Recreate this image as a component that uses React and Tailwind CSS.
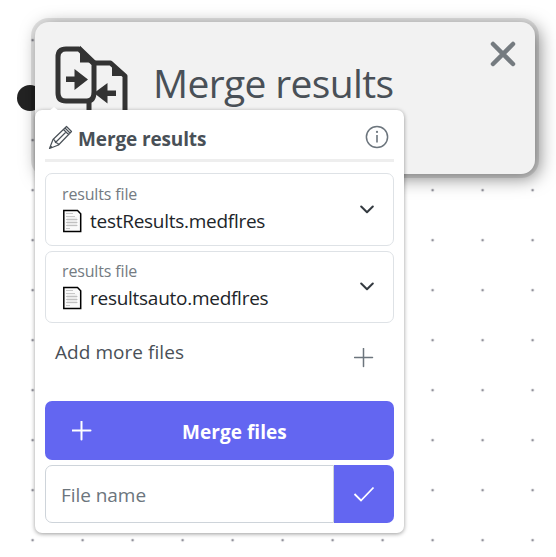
import React from "react";

function MergeIcon() {
  return (
    <svg width="76" height="76" viewBox="0 0 76 76" fill="none" className="block">
      <path d="M36 60V81H72V39L57.500 26H41" stroke="#333" strokeWidth="5" strokeLinejoin="round" />
      <path d="M59 25V39H73Z" fill="#333" />
      <path d="M13 12H26L41 27V55Q41 64 34 64H13Q5 64 5 56V20Q5 12 13 12Z" fill="#f2f2f2" stroke="#333" strokeWidth="5" strokeLinejoin="round" />
      <path d="M28 11V24.500H42Z" fill="#333" stroke="#333" strokeWidth="2" />
      <path d="M13 39.500H21.500V32L35 42.500L21.500 53V45H13Z" fill="#333" />
      <path d="M63 53.500H54.500V46L41 56L54.500 66.500V59H63Z" fill="#333" />
    </svg>
  );
}

function FileRow({ name, className }) {
  return (
    <div className={`flex items-center justify-between rounded-[7px] border border-[#dee2e6] pl-4 pr-[19px] ${className}`}>
      <div className="pt-0.5">
        <div className="-mt-1 mb-[2px] h-[22px] text-[16px] leading-[22px] tracking-[-0.15px] text-[#747b82]">results file</div>
        <div className="flex h-7 items-center">
          <svg width="20" height="24" viewBox="0 0 20 24" className="mr-2 shrink-0">
            <path d="M1.800 1.500H15.500L18.700 4.700V22.500H1.800Z" fill="#fafafa" stroke="#000" strokeWidth="1.500" />
            <path d="M4 4.500H11M4 7.500H13M4 10.500H15.500M4 13.500H15.500M4 16.500H15.500M4 19.500H8" stroke="#bbb" strokeWidth=".8" />
            <path d="M5 8.500H15V17.500H5Z" fill="#999" opacity=".15" />
          </svg>
          <span className="text-[19px] leading-7 tracking-[-0.27px] text-[#212529]">{name}</span>
        </div>
      </div>
      <svg width="14" height="10" viewBox="0 0 14 10" fill="none" className="shrink-0">
        <path d="M1.200 1.500L7 7.300L12.800 1.500" stroke="#343a40" strokeWidth="2" strokeLinecap="round" strokeLinejoin="round" />
      </svg>
    </div>
  );
}

function Plus({ color, width }) {
  return (
    <svg width="20" height="20" viewBox="0 0 20 20" className="block">
      <path d="M9.500 .5V18.500M.5 9.500H18.500" stroke={color} strokeWidth={width} strokeLinecap="round" />
    </svg>
  );
}

export default function App() {
  return (
    <main className="relative h-[557px] w-[556px] overflow-hidden bg-white font-['Open_Sans','Noto_Sans',sans-serif] bg-[radial-gradient(circle_at_center,#91919a_1px,transparent_1.7px)] bg-[length:50px_50px] bg-[position:7.600px_15.200px]">
      <div className="absolute left-[17px] top-[85px] h-[26px] w-[26px] rounded-full bg-[#232323]" />
      <section className="absolute left-[35px] top-[22px] flex h-[152px] w-[500px] items-start justify-between rounded-[14px] bg-[#f2f2f2] pl-[18px] pr-[18px] shadow-[0_0_0_4px_rgba(0,0,0,0.1),4px_4px_18px_rgba(0,0,0,0.5)]">
        <div className="flex">
          <div className="pt-[15px]"><MergeIcon /></div>
          <h1 className="ml-[24px] mt-[34px] whitespace-nowrap text-[39px] leading-[54px] tracking-[-0.65px] text-[#495057]">Merge results</h1>
        </div>
        <svg width="28" height="28" viewBox="0 0 28 28" className="mt-[18px]">
          <path d="M4 4L24 24M24 4L4 24" stroke="#757b80" strokeWidth="4.500" strokeLinecap="round" />
        </svg>
      </section>
      <section className="absolute left-[35px] top-[110px] flex h-[423px] w-[369px] flex-col rounded-[7px] bg-white px-2.5 pb-2.5 shadow-[0_1px_4px_rgba(0,0,0,0.4)]">
        <div className="absolute left-[14px] top-[-3px] h-0 w-0 border-x-[5px] border-b-[4px] border-x-transparent border-b-white" />
        <header className="flex h-[52px] shrink-0 items-center justify-between border-b-[3px] border-[#eee] pl-[3px] pr-[5px] pt-[6px]">
          <div className="flex items-center">
            <svg width="26" height="26" viewBox="0 0 26 26" fill="none" stroke="#495057" strokeWidth="1.200" strokeLinejoin="round">
              <path d="M1.500 23.500L5 14.500L18.500 1.500L23.500 6.500L10.500 20ZM5 14.500L6.500 15L7.500 17.500L10 18.500L10.500 20M15.500 4.500L20.500 9.500M17 3L22 8M7.500 17.500L18 7M2.500 21L4 22.500" />
            </svg>
            <h2 className="ml-1 mt-[2px] whitespace-nowrap text-[19px] font-bold leading-7 tracking-[-0.13px] text-[#495057]">Merge results</h2>
          </div>
          <svg width="24" height="24" viewBox="0 0 24 24" className="mb-[2px]" fill="none" stroke="#6c757d">
            <circle cx="12" cy="12" r="10.600" strokeWidth="1.500" />
            <path d="M12 10V17.500" strokeWidth="1.600" />
            <circle cx="12" cy="6.900" r="1.100" fill="#6c757d" stroke="none" />
          </svg>
        </header>
        <FileRow name="testResults.medflres" className="mt-[11px] h-[73px] shrink-0" />
        <FileRow name="resultsauto.medflres" className="mt-[5px] h-[72px] shrink-0" />
        <div className="flex h-[78px] shrink-0 justify-between pl-2.5 pr-5">
          <span className="mt-[15px] text-[19px] leading-7 tracking-[0.05px] text-[#495057]">Add more files</span>
          <div className="mt-[25px]"><Plus color="#6c757d" width="1.5" /></div>
        </div>
        <button className="flex h-[59px] shrink-0 items-center rounded-[7px] bg-[#6366f1] pl-[27px] text-white">
          <Plus color="white" width="2" />
          <span className="ml-[90px] mt-1 text-[19px] font-bold tracking-[0.05px]">Merge files</span>
        </button>
        <div className="mt-[5px] flex h-[58px] shrink-0">
          <input aria-label="File name" placeholder="File name" className="w-[289px] rounded-l-[7px] border border-[#ced4da] pl-[15px] pt-0.5 text-[19px] tracking-[-0.05px] placeholder:text-[#6c757d]" />
          <button className="flex w-[60px] items-center justify-center rounded-r-[7px] bg-[#6366f1]">
            <svg width="22" height="16" viewBox="0 0 22 16" fill="none"><path d="M1.500 8L8 14.500L20.500 1.500" stroke="white" strokeWidth="1.800" /></svg>
          </button>
        </div>
      </section>
    </main>
  );
}
